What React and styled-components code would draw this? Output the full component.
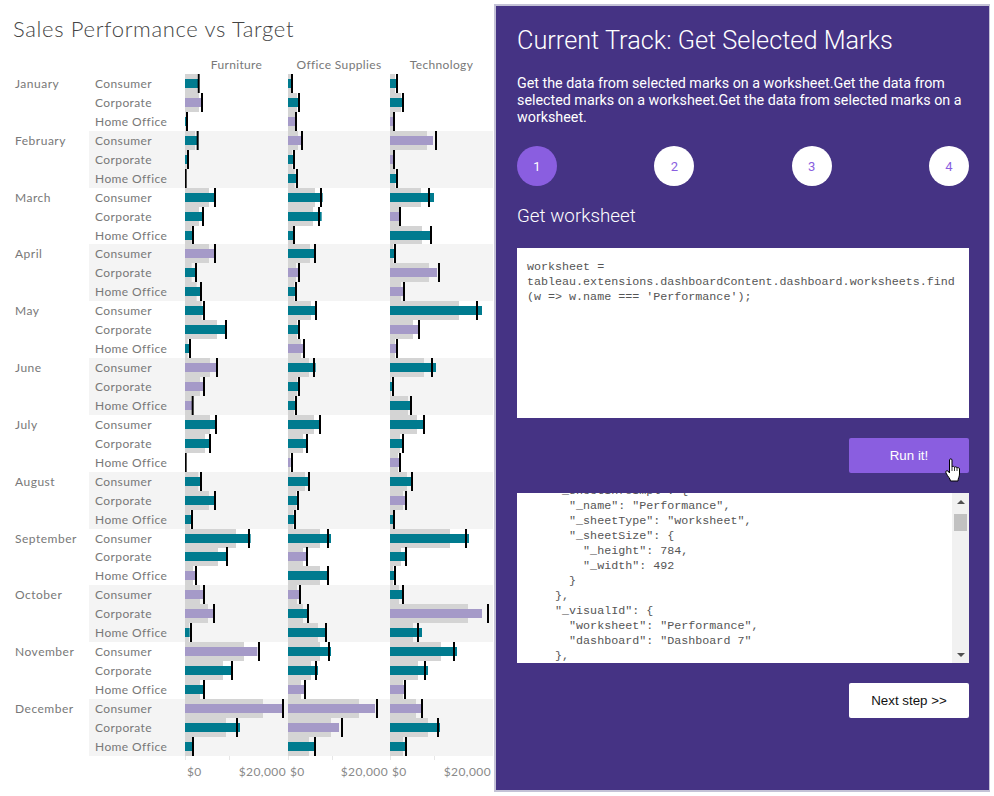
import styled, { createGlobalStyle } from "styled-components";

const GlobalStyle = createGlobalStyle`
  html, body { margin: 0; padding: 0; background: #fff; }
`;

const Page = styled.div`
  display: flex;
  align-items: flex-start;
  width: 994px;
  height: 796px;
  overflow: hidden;
`;

const Dashboard = styled.section`
  width: 494px;
  flex: none;
  font-family: Lato, "Open Sans", sans-serif;
  color: #787878;
`;

const Title = styled.h1`
  margin: 0;
  padding: 15px 0 0 13px;
  height: 41px;
  box-sizing: content-box;
  font-size: 22px;
  line-height: 28px;
  font-weight: 300;
  color: #444;
  letter-spacing: 0.65px;
`;

const HeaderRow = styled.div`
  display: grid;
  grid-template-columns: 185px 103px 102px 103px;
  height: 18px;
`;

const HeaderCell = styled.div`
  grid-column: ${(p) => p.$col};
  font-size: 12px;
  line-height: 18px;
  text-align: center;
  letter-spacing: 0.35px;
`;

const MonthGroup = styled.div`
  display: grid;
  grid-template-columns: 89px 1fr;
`;

const MonthName = styled.div`
  padding-left: 15px;
  font-size: 12px;
  line-height: 19px;
  letter-spacing: 0.5px;
`;

const SegmentList = styled.div`
  background: ${(p) => (p.$striped ? "#f4f4f4" : "#fff")};
  width: 404px;
`;

const SegmentRow = styled.div`
  display: grid;
  grid-template-columns: 96px 103px 102px 103px;
  height: 18.95px;
`;

const SegmentName = styled.div`
  padding-left: 6px;
  font-size: 12px;
  line-height: 19px;
  letter-spacing: 0.4px;
`;

const BarSvg = styled.svg`
  display: block;
`;

const Axis = styled.div`
  display: grid;
  grid-template-columns: 103px 102px 103px;
  margin-left: 185px;
  width: 308px;
`;

const AxisCell = styled.div`
  font-size: 12px;
  letter-spacing: 0.4px;
  color: #8a8a8a;
`;

const AxisLabels = styled.div`
  display: flex;
  justify-content: space-between;
  padding: 4px 2px 0 2px;
  line-height: 16px;
`;

const Panel = styled.section`
  width: 496px;
  height: 788px;
  margin-top: 4px;
  flex: none;
  border: 2px solid #c4c2d6;
  border-right-width: 1px;
  padding: 20px 20px 0 21px;
  box-sizing: border-box;
  background: #453384;
  color: #fff;
  font-family: Roboto, "Open Sans", sans-serif;
`;

const TrackTitle = styled.h2`
  margin: 0;
  font-size: 25.3px;
  line-height: 30px;
  font-weight: 300;
`;

const Description = styled.p`
  margin: 19px 0 0;
  font-size: 14.3px;
  line-height: 17px;
  font-weight: 400;
`;

const Steps = styled.div`
  display: flex;
  justify-content: space-between;
  margin-top: 20px;
`;

const Step = styled.div`
  display: flex;
  align-items: center;
  justify-content: center;
  width: 40px;
  height: 40px;
  border-radius: 50%;
  font-size: 13px;
  background: ${(p) => (p.$active ? "#8a5ee0" : "#fff")};
  color: ${(p) => (p.$active ? "#fff" : "#8a5ee0")};
`;

const StepTitle = styled.h3`
  margin: 18px 0 0;
  font-size: 18.8px;
  line-height: 24px;
  font-weight: 300;
`;

const CodeBox = styled.pre`
  margin: 20px 0 0;
  height: 170px;
  padding: 12px 10px;
  box-sizing: border-box;
  background: #fff;
  color: #555;
  font-family: "Liberation Mono", monospace;
  font-size: 11.7px;
  line-height: 15px;
  white-space: pre-wrap;
  word-break: break-all;
`;

const ButtonRow = styled.div`
  display: flex;
  justify-content: flex-end;
  margin-top: 20px;
`;

const ActionButton = styled.button`
  position: relative;
  width: 120px;
  height: 35px;
  padding: 0;
  border: none;
  border-radius: 2px;
  background: ${(p) => (p.$primary ? "#8a5ee0" : "#fff")};
  color: ${(p) => (p.$primary ? "#fff" : "#111")};
  font-family: "Liberation Sans", Arial, sans-serif;
  font-size: 13.33px;
`;

const HandCursor = styled.svg`
  position: absolute;
  left: 96px;
  top: 20px;
`;

const OutputBox = styled.div`
  display: flex;
  height: 170px;
  margin-top: 20px;
  background: #fff;
  overflow: hidden;
`;

const OutputText = styled.pre`
  flex: 1;
  margin: -9px 0 0;
  padding-left: 10px;
  color: #555;
  font-family: "Liberation Mono", monospace;
  font-size: 11.7px;
  line-height: 15px;
`;

const ScrollTrack = styled.div`
  display: flex;
  flex-direction: column;
  align-items: center;
  width: 17px;
  padding: 7px 0 6px;
  box-sizing: border-box;
  background: #f1f1f1;
`;

const ScrollArrow = styled.div`
  width: 0;
  height: 0;
  border-left: 4px solid transparent;
  border-right: 4px solid transparent;
  ${(p) => (p.$down ? "border-top: 4px solid #505050;" : "border-bottom: 4px solid #505050;")}
  ${(p) => (p.$down ? "margin-top: auto;" : "")}
`;

const ScrollThumb = styled.div`
  width: 13px;
  height: 17px;
  margin-top: 10px;
  background: #c1c1c1;
`;

const TEAL = "#007b8f";
const PURPLE = "#a59ac8";

// [reference, actual, target, under target?] in thirds of a pixel
const furniture = [
  [36,40,41],[42,48,51,1],[2,3,6],[30,37,38],[5,7,9],[0,0,2],[72,87,90],[42,52,54],[20,22,24],
  [72,87,90,1],[20,30,33],[35,46,48],[50,55,57],[96,120,123],[8,12,15],[75,94,96,1],[45,54,57,1],[20,21,23,1],
  [75,90,93],[60,72,75],[0,0,2],[40,45,48],[72,87,90],[15,18,21],[153,197,192],[99,125,126],[24,30,33,1],
  [45,54,57,1],[69,84,87,1],[12,14,18],[177,217,222,1],[114,138,141],[45,54,57],[234,291,294,1],[123,165,156],[22,22,24],
];
const officeSupplies = [
  [9,9,12],[27,30,33],[21,21,24,1],[30,39,42,1],[12,15,18],[20,25,27],[81,104,99],[75,101,93],[15,15,18],
  [66,78,81],[24,30,33,1],[18,21,24],[69,81,84],[27,30,33],[39,45,48,1],[63,83,78],[27,30,33],[18,21,24],
  [78,93,96],[45,54,57],[6,8,12,1],[51,60,63],[24,27,30],[15,18,21],[96,129,120],[45,54,57,1],[96,117,120],
  [27,33,36,1],[45,57,60],[90,111,114],[96,129,123],[69,90,84],[39,48,51,1],[213,261,267,1],[129,153,162,1],[63,78,81],
];
const technology = [
  [15,18,21],[33,36,39],[9,9,12,1],[111,129,138,1],[9,9,12,1],[15,18,21],[93,132,117],[27,27,30,1],[96,120,123],
  [9,12,15],[117,141,147,1],[33,39,42,1],[207,276,261],[69,84,87,1],[15,18,21,1],[102,138,126],[3,6,9],[54,60,63],
  [81,99,102],[30,36,39],[24,27,30,1],[51,63,66],[39,45,48,1],[9,9,12],[180,237,228],[33,45,48],[9,12,15],
  [27,36,39],[234,276,294,1],[69,96,84],[153,201,192],[84,114,105],[39,42,45,1],[78,93,96,1],[114,150,144],[39,45,48],
];

const months = ["January","February","March","April","May","June","July","August","September","October","November","December"];
const segments = ["Consumer","Corporate","Home Office"];
const categories = [
  { name: "Furniture", width: 103, rows: furniture },
  { name: "Office Supplies", width: 102, rows: officeSupplies },
  { name: "Technology", width: 103, rows: technology },
];

function Bullet({ row, width }) {
  const [ref, actual, target, under] = row;
  return (
    <BarSvg width={width} height={19}>
      <rect x={0} y={0} width={ref / 3} height={19} fill="#d4d4d4" />
      <rect x={0} y={5} width={actual / 3} height={9} fill={under ? PURPLE : TEAL} />
      <rect x={target / 3 - 1} y={0} width={2} height={19} fill="#000" />
    </BarSvg>
  );
}

const workbookCode = `worksheet =
tableau.extensions.dashboardContent.dashboard.worksheets.find
(w => w.name === 'Performance');`;

const outputJson = `    "_sheetInfoImpl": {
      "_name": "Performance",
      "_sheetType": "worksheet",
      "_sheetSize": {
        "_height": 784,
        "_width": 492
      }
    },
    "_visualId": {
      "worksheet": "Performance",
      "dashboard": "Dashboard 7"
    },`;

export default function App() {
  return (
    <Page>
      <GlobalStyle />
      <Dashboard>
        <Title>Sales Performance vs Target</Title>
        <HeaderRow>
          {categories.map((c, i) => (
            <HeaderCell key={c.name} $col={i + 2}>{c.name}</HeaderCell>
          ))}
        </HeaderRow>
        {months.map((month, m) => (
          <MonthGroup key={month}>
            <MonthName>{month}</MonthName>
            <SegmentList $striped={m % 2 === 1}>
              {segments.map((seg, s) => (
                <SegmentRow key={seg}>
                  <SegmentName>{seg}</SegmentName>
                  {categories.map((c) => (
                    <Bullet key={c.name} row={c.rows[m * 3 + s]} width={c.width} />
                  ))}
                </SegmentRow>
              ))}
            </SegmentList>
          </MonthGroup>
        ))}
        <Axis>
          {categories.map((c) => (
            <AxisCell key={c.name}>
              <BarSvg width={c.width} height={4}>
                <rect x={0} y={0} width={1} height={4} fill="#e6e6e6" />
                <rect x={44} y={0} width={1} height={4} fill="#e6e6e6" />
              </BarSvg>
              <AxisLabels>
                <span>$0</span>
                <span>$20,000</span>
              </AxisLabels>
            </AxisCell>
          ))}
        </Axis>
      </Dashboard>
      <Panel>
        <TrackTitle>Current Track: Get Selected Marks</TrackTitle>
        <Description>
          Get the data from selected marks on a worksheet.Get the data from selected marks on a worksheet.Get the data from selected marks on a worksheet.
        </Description>
        <Steps>
          {[1, 2, 3, 4].map((n) => (
            <Step key={n} $active={n === 1}>{n}</Step>
          ))}
        </Steps>
        <StepTitle>Get worksheet</StepTitle>
        <CodeBox>{workbookCode}</CodeBox>
        <ButtonRow>
          <ActionButton $primary>
            Run it!
            <HandCursor width="17" height="24" viewBox="0 0 17 24">
              <path
                d="M4.5 2C4.5.5 7 .5 7 2V9C7.5 8 9.5 8 9.5 9.5 10 8.5 12 8.5 12 10 12.5 9.2 14.5 9.5 14.5 11V16C14.5 19 13 20 13 23H5.5C5 20 3 19 1 15 .2 13.5 1.5 12 3 13L4.5 15Z"
                fill="#fff"
                stroke="#000"
                strokeWidth="1"
              />
              <path d="M7 9V13M9.5 9.5V13M12 10V13" fill="none" stroke="#000" strokeWidth="0.8" />
            </HandCursor>
          </ActionButton>
        </ButtonRow>
        <OutputBox>
          <OutputText>{outputJson}</OutputText>
          <ScrollTrack>
            <ScrollArrow />
            <ScrollThumb />
            <ScrollArrow $down />
          </ScrollTrack>
        </OutputBox>
        <ButtonRow>
          <ActionButton>Next step &gt;&gt;</ActionButton>
        </ButtonRow>
      </Panel>
    </Page>
  );
}
